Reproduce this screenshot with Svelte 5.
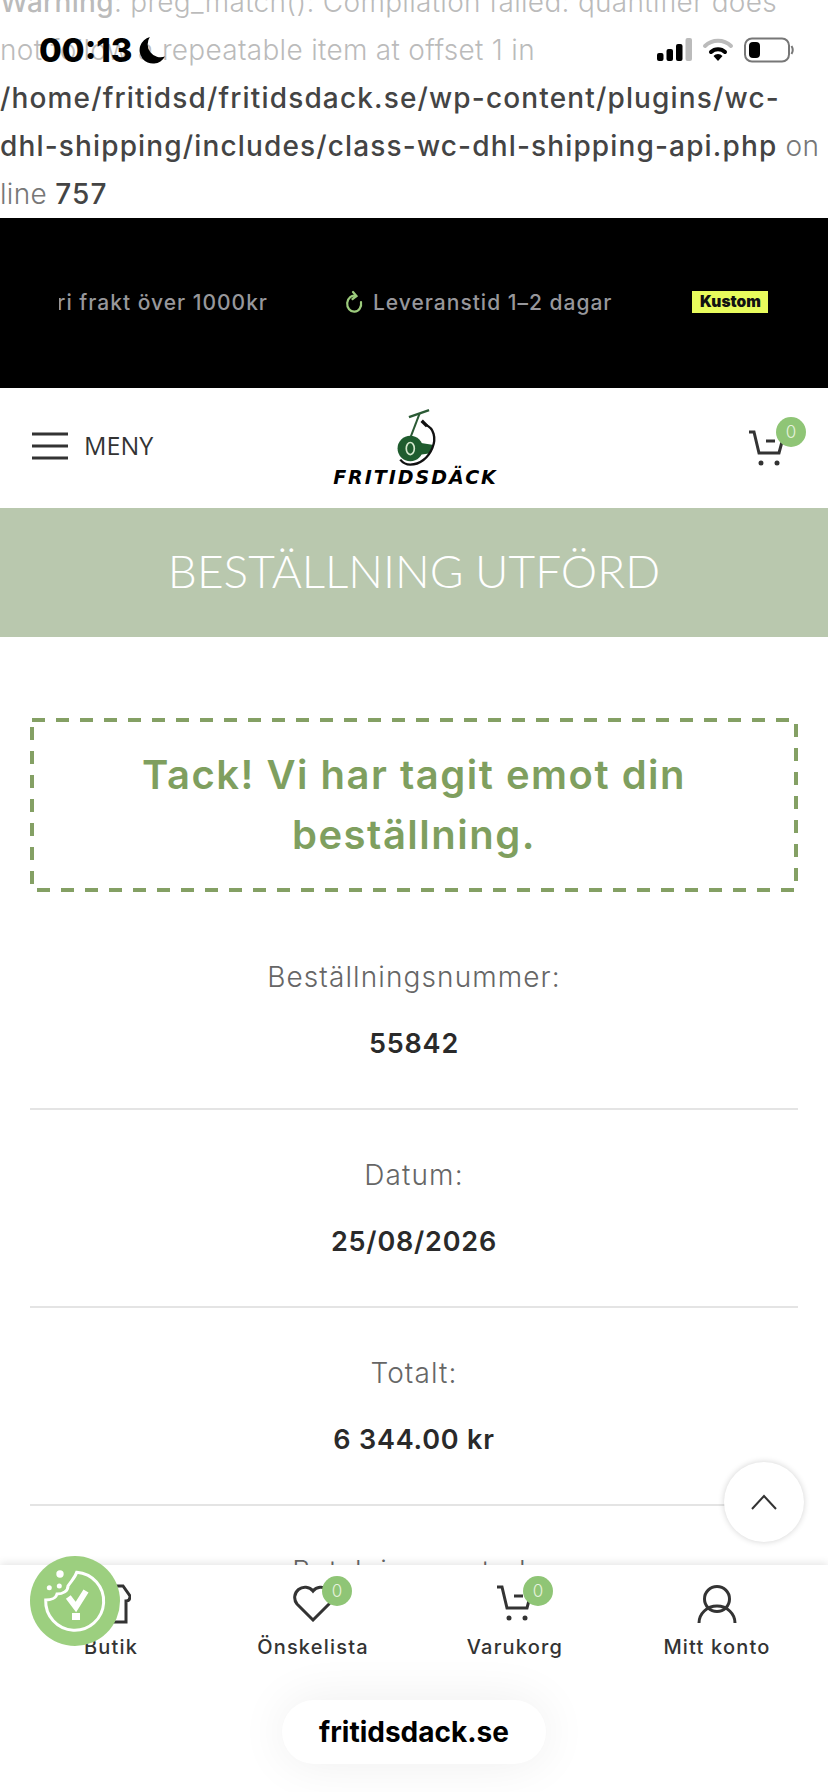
<script lang="ts">
	const rows = [
		{ label: 'Beställningsnummer:', value: '55842' },
		{ label: 'Datum:', value: '25/08/2026' },
		{ label: 'Totalt:', value: '6 344.00 kr' }
	];
</script>

<div class="page">
	<div class="warning">
		<b>Warning</b>: preg_match(): Compilation failed: quantifier does not follow a repeatable item at offset 1 in
		<b class="dark">/home/fritidsd/fritidsdack.se/wp-content/plugins/wc-dhl-shipping/includes/class-wc-dhl-shipping-api.php</b>
		on line <b class="dark">757</b>
	</div>

	<div class="promo">
		<div class="promo-clip"><span class="promo-text">Fri frakt över 1000kr</span></div>
		<div class="promo-item">
			<svg width="20" height="24" viewBox="0 0 20 24" fill="none" stroke="#9ccb7c" stroke-width="2.2" stroke-linecap="round">
				<path d="M12 6 A 7 8 0 1 0 17 12" />
				<path d="M9 2 L12.5 6 L8.5 9" />
			</svg>
			<span class="promo-text">Leveranstid 1–2 dagar</span>
		</div>
		<div class="kustom">Kustom</div>
	</div>

	<header class="head">
		<div class="menu">
			<svg width="36" height="28" viewBox="0 0 36 28" fill="none" stroke="#333" stroke-width="3">
				<path d="M0 2H36M0 14H36M0 26H36" />
			</svg>
			<span class="menu-label">MENY</span>
		</div>
		<div class="logo">
			<svg width="44" height="62" viewBox="280 30 130 185" fill="none">
				<path d="M318 63 L378 42" stroke="#2b5a35" stroke-width="7" />
				<path d="M350 52 L322 125" stroke="#2b5a35" stroke-width="6" />
				<circle cx="322" cy="157" r="38" fill="#1f5c2e" />
				<path d="M340 138 L392 146 Q388 162 378 172 L345 176 Z" fill="#1f5c2e" />
				<ellipse cx="322" cy="157" rx="12" ry="18" stroke="#d5e8cd" stroke-width="5" />
				<path d="M368 86 C392 96 400 125 388 155 C376 185 350 205 322 205 C310 205 300 200 292 190" stroke="#111" stroke-width="7" />
				<path d="M356 74 L372 90" stroke="#111" stroke-width="10" />
			</svg>
			<span class="logo-text">FRITIDSDÄCK</span>
		</div>
		<div class="cart-wrap">
			<span class="cart">
				<svg width="38" height="38" viewBox="0 0 38 38" fill="none" stroke="#333" stroke-width="3">
					<path d="M1 3 H6 L11 24 H31 L35 9" />
					<path d="M18 12 H27" />
					<circle cx="13" cy="34" r="2.5" fill="#333" stroke="none" />
					<circle cx="29" cy="34" r="2.5" fill="#333" stroke="none" />
				</svg>
				<span class="badge">0</span>
			</span>
		</div>
	</header>

	<h1 class="title">BESTÄLLNING UTFÖRD</h1>

	<main class="content">
		<div class="thanks">
			<svg class="dashes" width="768" height="174" viewBox="0 0 768 174" fill="none">
				<rect x="2" y="2" width="764" height="170" stroke="#84a064" stroke-width="4" stroke-dasharray="13 11" />
			</svg>
			Tack! Vi har tagit emot din beställning.
		</div>
		{#each rows as row}
			<div class="row">
				<div class="label">{row.label}</div>
				<div class="value">{row.value}</div>
			</div>
		{/each}
		<div class="row last">
			<div class="label">Betalningsmetod:</div>
		</div>
	</main>

	<!-- status bar -->
	<div class="status">
		<div class="clock">
			00:13
			<svg width="28" height="28" viewBox="0 0 26 26"><path d="M11 1 A 12.5 12.5 0 1 0 25 19 A 12 12 0 0 1 11 1 Z" fill="#000" /></svg>
		</div>
		<div class="sys">
			<svg width="35" height="24" viewBox="0 0 35 24">
				<rect x="0" y="15" width="6.5" height="8" rx="2" fill="#000" />
				<rect x="9.5" y="11" width="6.5" height="12" rx="2" fill="#000" />
				<rect x="19" y="6" width="6.5" height="17" rx="2" fill="#000" />
				<rect x="28.5" y="0" width="6.5" height="23" rx="2" fill="#bbb" />
			</svg>
			<svg width="32" height="24" viewBox="0 0 32 24" fill="none" stroke-linecap="round">
				<path d="M3 8 A 19 19 0 0 1 29 8" stroke="#bbb" stroke-width="4" />
				<path d="M9 14 A 10 10 0 0 1 23 14" stroke="#000" stroke-width="4" />
				<path d="M16 23 L11.5 18 A 6 6 0 0 1 20.5 18 Z" fill="#000" />
			</svg>
			<svg width="50" height="26" viewBox="0 0 50 26" fill="none">
				<rect x="1" y="1.5" width="44" height="23" rx="7" stroke="#777" stroke-width="2" />
				<rect x="5" y="5" width="11" height="16" rx="4" fill="#000" />
				<path d="M47.5 9 Q50 13 47.5 17" stroke="#777" stroke-width="2" />
			</svg>
		</div>
	</div>

	<button class="to-top" aria-label="Till toppen">
		<svg width="28" height="18" viewBox="0 0 28 18" fill="none" stroke="#333" stroke-width="2"><path d="M2 16 L14 3 L26 16" /></svg>
	</button>

	<nav class="tabs">
		<div class="tab">
			<span class="tab-icon">
				<svg width="40" height="40" viewBox="0 0 40 40" fill="none" stroke="#333" stroke-width="3">
					<path d="M8 2 H32 L39 12 Q39 17 35 17 V38 H5 V17 Q1 17 1 12 Z" />
				</svg>
			</span>
			<span>Butik</span>
		</div>
		<div class="tab">
			<span class="tab-icon">
				<svg width="40" height="38" viewBox="0 0 40 38" fill="none" stroke="#333" stroke-width="3">
					<path d="M20 36 L4 20 A 10 10 0 0 1 20 7 A 10 10 0 0 1 36 20 Z" />
				</svg>
				<span class="badge">0</span>
			</span>
			<span>Önskelista</span>
		</div>
		<div class="tab">
			<span class="tab-icon">
				<svg width="38" height="38" viewBox="0 0 38 38" fill="none" stroke="#333" stroke-width="3">
					<path d="M1 3 H6 L11 24 H31 L35 9" />
					<path d="M18 12 H27" />
					<circle cx="13" cy="34" r="2.5" fill="#333" stroke="none" />
					<circle cx="29" cy="34" r="2.5" fill="#333" stroke="none" />
				</svg>
				<span class="badge">0</span>
			</span>
			<span>Varukorg</span>
		</div>
		<div class="tab">
			<span class="tab-icon">
				<svg width="40" height="40" viewBox="0 0 40 40" fill="none" stroke="#333" stroke-width="3">
					<circle cx="20" cy="15" r="12.5" />
					<path d="M2 39 A 18 17 0 0 1 38 39" />
				</svg>
			</span>
			<span>Mitt konto</span>
		</div>
	</nav>

	<div class="cookie">
		<svg width="64" height="64" viewBox="0 0 64 64" fill="none">
			<path d="M33.7 3.3 A 29 29 0 1 1 2.7 31 C 8 31 13 29 14 25 C 20 25 25 22 25 17 C 28 12 32 9 33.7 3.3 Z" stroke="#fff" stroke-width="3" />
			<path d="M25.3 28 L32.9 38 L43 22" stroke="#fff" stroke-width="6" />
			<rect x="29" y="44" width="8" height="7" fill="#fff" />
			<circle cx="17" cy="5" r="3.7" fill="#fff" />
			<circle cx="6.3" cy="18.7" r="2.5" fill="#fff" />
			<circle cx="16.3" cy="17" r="2.5" fill="#fff" />
		</svg>
	</div>

	<div class="domain">fritidsdack.se</div>
</div>

<style>
	:global(body) {
		margin: 0;
		background: #fff;
	}

	.page {
		position: relative;
		width: 828px;
		height: 1792px;
		overflow: hidden;
		background: #fff;
		font-family: 'Inter', sans-serif;
		color: #333;
	}

	.warning {
		margin-top: -22px;
		height: 240px;
		padding-right: 6px;
		font-size: 28px;
		line-height: 48px;
		font-weight: 300;
		letter-spacing: 0.3px;
		color: #777;
	}

	.warning b {
		font-weight: 500;
		color: #777;
	}

	.warning b.dark {
		color: #444;
		letter-spacing: 1.15px;
	}

	.promo {
		height: 170px;
		padding-bottom: 2px;
		box-sizing: border-box;
		background: #000;
		display: flex;
		align-items: center;
		font-size: 21px;
		font-weight: 500;
		letter-spacing: 1px;
	}

	.promo-clip {
		width: 209px;
		margin-left: 59px;
		overflow: hidden;
		white-space: nowrap;
		direction: rtl;
	}

	.promo-text {
		color: #97979b;
	}

	.promo-item {
		margin-left: 76px;
		display: flex;
		align-items: center;
		gap: 9px;
	}

	.kustom {
		margin-left: 80px;
		width: 76px;
		height: 22px;
		background: #e8fb5c;
		color: #111;
		font-size: 15.5px;
		line-height: 22px;
		font-weight: 900;
		text-align: center;
		letter-spacing: 0;
	}

	.head {
		height: 120px;
		box-sizing: border-box;
		display: grid;
		grid-template-columns: 1fr auto 1fr;
		align-items: center;
		padding: 0 24px 4px 32px;
	}

	.menu {
		display: flex;
		align-items: center;
		gap: 16px;
		font-family: 'Open Sans', sans-serif;
		font-size: 25px;
		color: #333;
	}

	.menu-label {
		margin-bottom: 3px;
	}

	.logo {
		display: flex;
		flex-direction: column;
		align-items: center;
		line-height: 1;
	}

	.logo-text {
		font-family: 'DejaVu Sans', sans-serif;
		font-style: italic;
		font-weight: 700;
		font-size: 19px;
		letter-spacing: 2px;
		color: #000;
		margin-right: 5px;
	}

	.cart-wrap {
		display: flex;
		justify-content: flex-end;
	}

	.cart {
		position: relative;
		display: block;
		margin: 4px 18px 0 0;
		height: 38px;
	}

	.badge {
		position: absolute;
		top: -8px;
		right: -19px;
		width: 30px;
		height: 30px;
		border-radius: 50%;
		background: #8fc576;
		color: #e6f2dd;
		font-size: 17px;
		font-weight: 300;
		line-height: 30px;
		text-align: center;
		letter-spacing: 0;
	}

	.cart .badge {
		top: -12px;
		right: -20px;
	}

	.title {
		margin: 0;
		height: 129px;
		background: #b9c8ae;
		color: #fff;
		font-family: 'Lato', sans-serif;
		font-size: 46px;
		font-weight: 300;
		line-height: 125px;
		text-align: center;
		word-spacing: -1px;
	}

	.content {
		padding: 81px 30px 0;
		text-align: center;
	}

	.thanks {
		position: relative;
		height: 174px;
		box-sizing: border-box;
		padding: 27px 60px 0;
		font-size: 40px;
		line-height: 60px;
		font-weight: 600;
		letter-spacing: 1.5px;
		color: #7f9f5f;
		margin-bottom: 20px;
	}

	.dashes {
		position: absolute;
		top: 0;
		left: 0;
	}

	.row {
		height: 198px;
		box-sizing: border-box;
		padding-top: 47px;
		border-bottom: 2px solid #e4e4e4;
	}

	.row.last {
		border-bottom: none;
	}

	.label {
		font-size: 28px;
		font-weight: 300;
		line-height: 36px;
		letter-spacing: 1.1px;
		color: #666;
	}

	.value {
		margin-top: 31px;
		font-size: 27px;
		font-weight: 600;
		line-height: 36px;
		letter-spacing: 0.8px;
		color: #2a2a2a;
	}

	.status {
		position: absolute;
		top: 0;
		left: 0;
		right: 0;
		height: 76px;
		box-sizing: border-box;
		padding: 30px 34px 6px 39px;
		background: rgba(255, 255, 255, 0.5);
		display: flex;
		justify-content: space-between;
		align-items: center;
	}

	.clock {
		display: flex;
		align-items: center;
		gap: 5px;
		font-size: 33px;
		font-weight: 800;
		color: #000;
	}

	.sys {
		display: flex;
		align-items: center;
		gap: 10px;
	}

	.to-top {
		position: absolute;
		left: 724px;
		top: 1462px;
		width: 80px;
		height: 80px;
		border: none;
		border-radius: 50%;
		background: #fff;
		box-shadow: 0 0 6px rgba(0, 0, 0, 0.18);
		display: flex;
		align-items: center;
		justify-content: center;
		padding: 0;
	}

	.tabs {
		position: absolute;
		left: 0;
		right: 0;
		bottom: 0;
		height: 227px;
		padding: 19px 10px 0;
		box-sizing: border-box;
		background: #fff;
		box-shadow: 0 -2px 8px rgba(0, 0, 0, 0.1);
		display: grid;
		grid-template-columns: repeat(4, 1fr);
		align-content: start;
	}

	.tab {
		display: flex;
		flex-direction: column;
		align-items: center;
		gap: 11px;
		font-size: 20px;
		font-weight: 500;
		letter-spacing: 1.2px;
		color: #333;
	}

	.tab-icon {
		position: relative;
		height: 40px;
		display: block;
	}

	.cookie {
		position: absolute;
		left: 30px;
		top: 1556px;
		width: 90px;
		height: 90px;
		border-radius: 50%;
		background: #9ccf7f;
		display: flex;
		align-items: center;
		justify-content: center;
	}

	.domain {
		position: absolute;
		left: 282px;
		top: 1700px;
		width: 264px;
		height: 64px;
		border-radius: 32px;
		background: #fff;
		box-shadow: 0 0 50px rgba(0, 0, 0, 0.07);
		text-align: center;
		font-size: 28px;
		font-weight: 700;
		line-height: 64px;
		color: #000;
	}
</style>
